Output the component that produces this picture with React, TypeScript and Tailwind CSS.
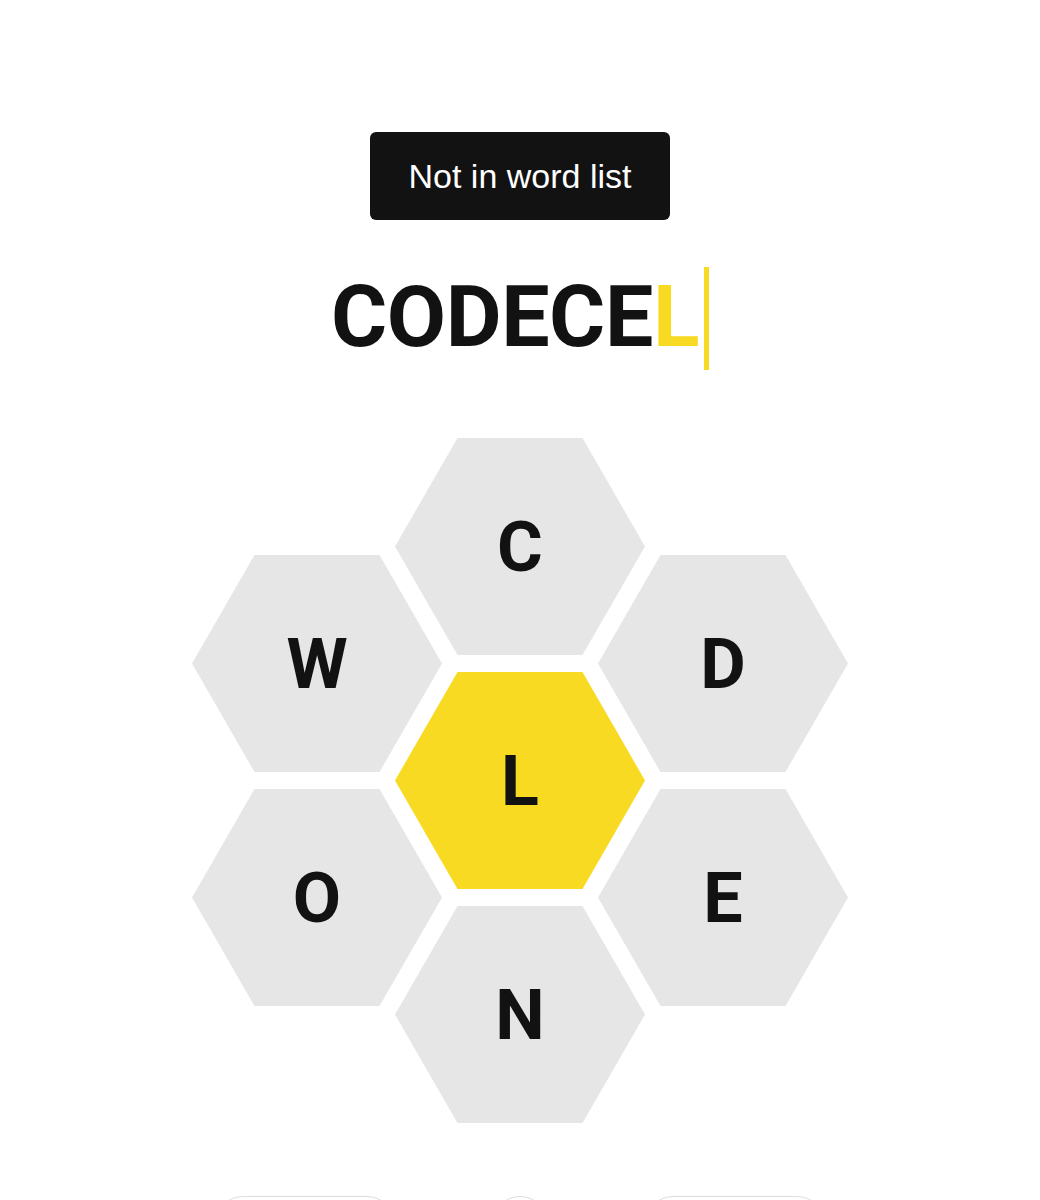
import React from "react"

const hexShape =
  "[clip-path:polygon(25%_0,75%_0,100%_50%,75%_100%,25%_100%,0_50%)]"

function Hex({ letter, center = false }: { letter: string; center?: boolean }) {
  return (
    <div
      className={`${hexShape} flex h-[217px] w-[250px] items-center justify-center ${
        center ? "bg-[#f7da21]" : "bg-[#e6e6e6]"
      }`}
    >
      <span className="text-[70px] font-bold leading-none text-[#121212] [font-family:Roboto,'Liberation_Sans',sans-serif]">
        {letter}
      </span>
    </div>
  )
}

export default function App() {
  const typed = "CODECE"
  const last = "L"

  return (
    <div className="flex min-h-[1200px] w-full flex-col items-center bg-white pt-[132px] [font-family:Roboto,'Liberation_Sans',sans-serif]">
      {/* toast */}
      <div className="flex h-[88px] w-[300px] items-center justify-center rounded-[6px] bg-[#121212]">
        <span className="text-[34px] font-normal text-white [font-family:'Liberation_Sans',Arial,sans-serif]">
          Not in word list
        </span>
      </div>

      {/* input */}
      <div className="mt-[47px] flex h-[103px] items-center">
        <span className="-mt-[4px] text-[86px] font-bold leading-none tracking-[-0.005em] text-[#121212]">
          {typed}
          <span className="text-[#f7da21]">{last}</span>
        </span>
        <div className="ml-[5px] h-[103px] w-[5px] bg-[#f7da21]" />
      </div>

      {/* hive */}
      <div className="mt-[68px] flex">
        <div className="flex flex-col gap-[17px] pt-[117px]">
          <Hex letter="W" />
          <Hex letter="O" />
        </div>
        <div className="-ml-[47px] flex flex-col gap-[17px]">
          <Hex letter="C" />
          <Hex letter="L" center />
          <Hex letter="N" />
        </div>
        <div className="-ml-[47px] flex flex-col gap-[17px] pt-[117px]">
          <Hex letter="D" />
          <Hex letter="E" />
        </div>
      </div>

      {/* buttons (only their top edges show) */}
      <div className="mt-[73px] flex items-center gap-[97px]">
        <button
          aria-label="Delete"
          className="h-[56px] w-[180px] rounded-full border border-[#dcdcdc] bg-white"
        />
        <button
          aria-label="Shuffle"
          className="h-[56px] w-[56px] rounded-full border border-[#dcdcdc] bg-white"
        />
        <button
          aria-label="Enter"
          className="h-[56px] w-[180px] rounded-full border border-[#dcdcdc] bg-white"
        />
      </div>
    </div>
  )
}
